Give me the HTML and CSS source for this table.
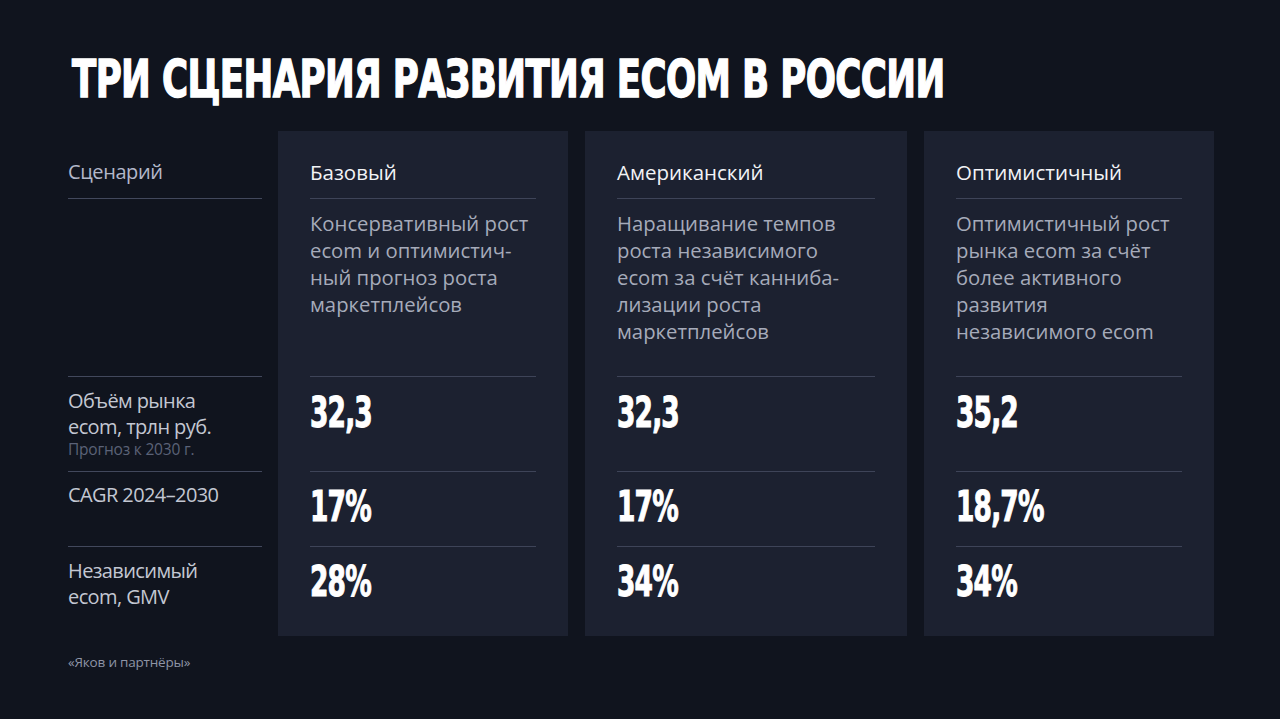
FILE: index.html
```html
<!DOCTYPE html>
<html lang="ru">
<head>
<meta charset="utf-8">
<title>Три сценария развития ecom в России</title>
<link rel="stylesheet" href="styles.css">
</head>
<body>
<div class="slide">
  <h1 class="title"><span class="title-text">ТРИ СЦЕНАРИЯ РАЗВИТИЯ ECOM В РОССИИ</span></h1>
  <div class="table">
    <div class="col labels">
      <div class="cell r-head"><span class="label-head">Сценарий</span></div>
      <div class="cell r-desc"></div>
      <div class="cell r-v1">
        <div class="label">Объём рынка<br>ecom, трлн руб.</div>
        <div class="note">Прогноз к 2030 г.</div>
      </div>
      <div class="cell r-v2"><div class="label">CAGR 2024–2030</div></div>
      <div class="cell r-v3 last"><div class="label">Независимый<br>ecom, GMV</div></div>
    </div>

    <div class="col card card-narrow">
      <div class="cell r-head"><span class="card-head">Базовый</span></div>
      <div class="cell r-desc"><p class="desc">Консервативный рост<br>ecom и оптимистич-<br>ный прогноз роста<br>маркетплейсов</p></div>
      <div class="cell r-v1"><span class="value">32,3</span></div>
      <div class="cell r-v2"><span class="value">17%</span></div>
      <div class="cell r-v3 last"><span class="value">28%</span></div>
    </div>

    <div class="col card card-wide">
      <div class="cell r-head"><span class="card-head">Американский</span></div>
      <div class="cell r-desc"><p class="desc">Наращивание темпов<br>роста независимого<br>ecom за счёт канниба-<br>лизации роста<br>маркетплейсов</p></div>
      <div class="cell r-v1"><span class="value">32,3</span></div>
      <div class="cell r-v2"><span class="value">17%</span></div>
      <div class="cell r-v3 last"><span class="value">34%</span></div>
    </div>

    <div class="col card card-narrow">
      <div class="cell r-head"><span class="card-head">Оптимистичный</span></div>
      <div class="cell r-desc"><p class="desc">Оптимистичный рост<br>рынка ecom за счёт<br>более активного<br>развития<br>независимого ecom</p></div>
      <div class="cell r-v1"><span class="value">35,2</span></div>
      <div class="cell r-v2"><span class="value">18,7%</span></div>
      <div class="cell r-v3 last"><span class="value">34%</span></div>
    </div>
  </div>
  <div class="source">«Яков и партнёры»</div>
</div>
</body>
</html>
```

FILE: styles.css
```css
* { box-sizing: border-box; }

html, body {
  margin: 0;
  padding: 0;
  background: #10141e;
}

body {
  font-family: "Open Sans", "Noto Sans", sans-serif;
  color: #c4c8d3;
}

.slide {
  width: 1280px;
  height: 719px;
  overflow: hidden;
  background: #10141e;
  padding-top: 52px;
}

.title {
  margin: 0 0 0 72px;
  font-family: "DejaVu Sans Condensed", "DejaVu Sans", sans-serif;
  font-weight: 700;
  font-size: 52px;
  line-height: 54px;
  color: #ffffff;
  white-space: nowrap;
}

.title-text {
  display: inline-block;
  letter-spacing: -0.8px;
  -webkit-text-stroke: 1.4px #ffffff;
  transform: scaleX(0.76);
  transform-origin: left center;
}

.table {
  display: flex;
  margin-top: 25px;
  margin-left: 68px;
}

.col {
  display: flex;
  flex-direction: column;
}

.labels {
  width: 194px;
  margin-right: 16px;
}

.card {
  background: #1c2130;
  padding: 0 32px;
  margin-right: 17px;
}

.card-narrow { width: 290px; }
.card-wide { width: 322px; }

.cell {
  border-bottom: 1px solid #3e4458;
}

.labels .cell { border-bottom-color: #42485c; }

.cell.last { border-bottom: none; }
.labels .cell.last { border-bottom: none; }

.r-head { height: 68px; padding-top: 26px; }
.r-desc { height: 178px; padding-top: 11px; }
.r-v1 { height: 95px; padding-top: 11px; }
.r-v2 { height: 75px; padding-top: 10px; }
.r-v3 { height: 89px; padding-top: 11px; }

.card .r-v1 { padding-top: 15px; }
.card .r-v2 { padding-top: 14px; }
.card .r-v3 { padding-top: 14px; }

.label-head {
  display: block;
  font-size: 20px;
  line-height: 30px;
  color: #b3b8ca;
  letter-spacing: -0.4px;
}

.card-head {
  display: block;
  font-size: 20.5px;
  line-height: 30px;
  color: #f2f3f6;
  letter-spacing: 0;
}

.desc {
  margin: 0;
  font-size: 20.3px;
  line-height: 27px;
  color: #a6abba;
  letter-spacing: 0;
}

.label {
  font-size: 20px;
  line-height: 26px;
  color: #c3c7d2;
  letter-spacing: -0.6px;
}

.note {
  font-size: 15.5px;
  line-height: 18px;
  color: #5b6277;
  letter-spacing: -0.2px;
}

.value {
  display: inline-block;
  font-family: "DejaVu Sans Condensed", "DejaVu Sans", sans-serif;
  font-weight: 700;
  font-size: 42px;
  line-height: 42px;
  letter-spacing: -1.2px;
  color: #ffffff;
  -webkit-text-stroke: 1px #ffffff;
  transform: scaleX(0.7);
  transform-origin: left center;
}

.source {
  margin: 18px 0 0 68px;
  font-size: 13.5px;
  line-height: 16px;
  color: #8e94a6;
  letter-spacing: -0.2px;
}
```
